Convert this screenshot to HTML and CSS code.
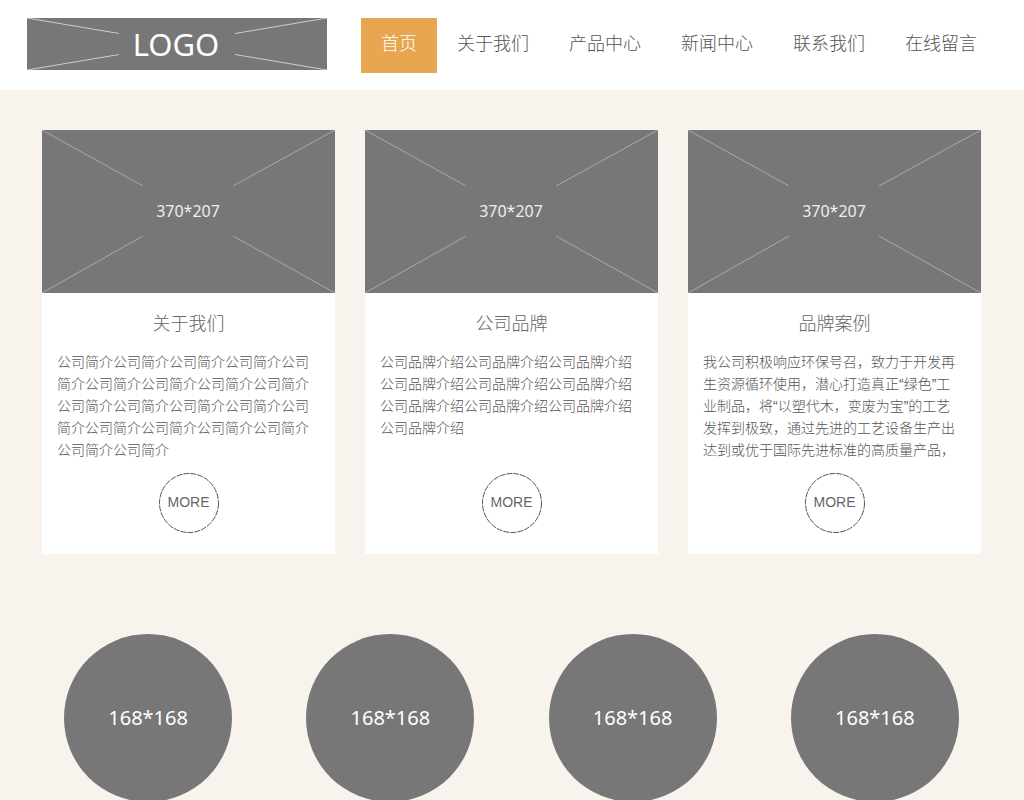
FILE: index.html
```html
<!DOCTYPE html>
<html lang="zh-CN">
<head>
<meta charset="utf-8">
<meta name="viewport" content="width=device-width, initial-scale=1">
<title>首页</title>
<link rel="stylesheet" href="styles.css">
</head>
<body>
<header class="header">
  <div class="container header-inner">
    <a class="logo" href="#" aria-label="LOGO">
      <svg class="picture" viewBox="0 0 300 52">
        <rect class="fill" width="300" height="52"/>
        <path class="line" d="M0 0L92 15.500M300 0L208 15.500M0 52L92 36.500M300 52L208 36.500"/>
        <text class="logo-text" x="149" y="38">LOGO</text>
      </svg>
    </a>
    <nav class="nav">
      <a class="nav-link active" href="#">首页</a>
      <a class="nav-link" href="#">关于我们</a>
      <a class="nav-link" href="#">产品中心</a>
      <a class="nav-link" href="#">新闻中心</a>
      <a class="nav-link" href="#">联系我们</a>
      <a class="nav-link" href="#">在线留言</a>
    </nav>
  </div>
</header>
<main class="container main">
  <section class="cards">
    <article class="card">
      <svg class="picture" viewBox="0 0 293 163">
        <rect class="fill" width="293" height="163"/>
        <path class="line soft" d="M0 0L101 56M293 0L191 56M0 163L101 106M293 163L191 106"/>
        <text class="size-text" x="146" y="87">370*207</text>
      </svg>
      <h2 class="card-title">关于我们</h2>
      <p class="card-text">公司简介公司简介公司简介公司简介公司简介公司简介公司简介公司简介公司简介公司简介公司简介公司简介公司简介公司简介公司简介公司简介公司简介公司简介公司简介公司简介</p>
      <a class="more" href="#"><svg class="ring" viewBox="0 0 60 60"><circle cx="30" cy="30" r="29.500"/></svg>MORE</a>
    </article>
    <article class="card">
      <svg class="picture" viewBox="0 0 293 163">
        <rect class="fill" width="293" height="163"/>
        <path class="line soft" d="M0 0L101 56M293 0L191 56M0 163L101 106M293 163L191 106"/>
        <text class="size-text" x="146" y="87">370*207</text>
      </svg>
      <h2 class="card-title">公司品牌</h2>
      <p class="card-text">公司品牌介绍公司品牌介绍公司品牌介绍公司品牌介绍公司品牌介绍公司品牌介绍公司品牌介绍公司品牌介绍公司品牌介绍公司品牌介绍</p>
      <a class="more" href="#"><svg class="ring" viewBox="0 0 60 60"><circle cx="30" cy="30" r="29.500"/></svg>MORE</a>
    </article>
    <article class="card">
      <svg class="picture" viewBox="0 0 293 163">
        <rect class="fill" width="293" height="163"/>
        <path class="line soft" d="M0 0L101 56M293 0L191 56M0 163L101 106M293 163L191 106"/>
        <text class="size-text" x="146" y="87">370*207</text>
      </svg>
      <h2 class="card-title">品牌案例</h2>
      <p class="card-text">我公司积极响应环保号召，致力于开发再生资源循环使用，潜心打造真正“绿色”工业制品，将“以塑代木，变废为宝”的工艺发挥到极致，通过先进的工艺设备生产出达到或优于国际先进标准的高质量产品，</p>
      <a class="more" href="#"><svg class="ring" viewBox="0 0 60 60"><circle cx="30" cy="30" r="29.500"/></svg>MORE</a>
    </article>
  </section>
  <section class="circles">
    <a class="circle" href="#">168*168</a>
    <a class="circle" href="#">168*168</a>
    <a class="circle" href="#">168*168</a>
    <a class="circle" href="#">168*168</a>
  </section>
</main>
</body>
</html>
```
FILE: styles.css
```css
* {
  box-sizing: border-box;
}

body {
  margin: 0;
  overflow-x: hidden;
  background: #f8f3ed;
  color: #555;
  font-family: "Liberation Sans", "Noto Sans CJK SC", sans-serif;
  font-size: 14px;
  font-weight: 300;
  line-height: 22px;
}

a {
  color: inherit;
  text-decoration: none;
}

.container {
  max-width: 1170px;
  margin: 0 auto;
  padding: 0 27px;
}

.main {
  padding-right: 28px;
}

.header {
  background: #fff;
}

.header-inner {
  display: flex;
  justify-content: space-between;
  align-items: flex-start;
  min-height: 90px;
  padding-top: 18px;
}

.logo {
  width: 300px;
}

.picture {
  display: block;
  width: 100%;
}

.fill {
  fill: #777;
}

.line {
  fill: none;
  stroke: #ccc;
}

.soft {
  stroke: #aaa;
}

.picture text {
  fill: #fff;
  font-family: "Noto Sans", sans-serif;
  font-weight: 400;
  text-anchor: middle;
}

.picture .logo-text {
  font-size: 31px;
}

.picture .size-text {
  fill: #eee;
  font-size: 16px;
}

.nav {
  display: flex;
}

.nav-link {
  height: 55px;
  padding: 0 20px;
  font-size: 18px;
  line-height: 52px;
  white-space: nowrap;
}

.active {
  background: #e8a650;
  color: #fff;
}

.cards {
  display: grid;
  grid-template-columns: repeat(3, 1fr);
  gap: 30px;
  padding: 40px 15px 0;
}

.card {
  display: flex;
  flex-direction: column;
  align-items: center;
  padding-bottom: 21px;
  background: #fff;
}

.card-title {
  margin: 16px 0 12px;
  color: #666;
  font-size: 18px;
  font-weight: 300;
  line-height: 30px;
}

.card-text {
  width: 100%;
  height: 110px;
  margin: 0 0 12px;
  padding: 0 20px 0 15px;
  overflow: hidden;
}

.more {
  position: relative;
  width: 60px;
  height: 60px;
  color: #666;
  line-height: 58px;
  text-align: center;
}

.ring {
  position: absolute;
  inset: 0;
  fill: none;
  stroke: #555;
  stroke-dasharray: 6 1;
}

.circles {
  display: grid;
  grid-template-columns: repeat(4, 1fr);
  justify-items: center;
  padding: 80px 0;
}

.circle {
  width: 168px;
  height: 168px;
  border-radius: 50%;
  background: #777;
  color: #fff;
  font-family: "Noto Sans", sans-serif;
  font-size: 20px;
  font-weight: 400;
  line-height: 168px;
  text-align: center;
}
```
